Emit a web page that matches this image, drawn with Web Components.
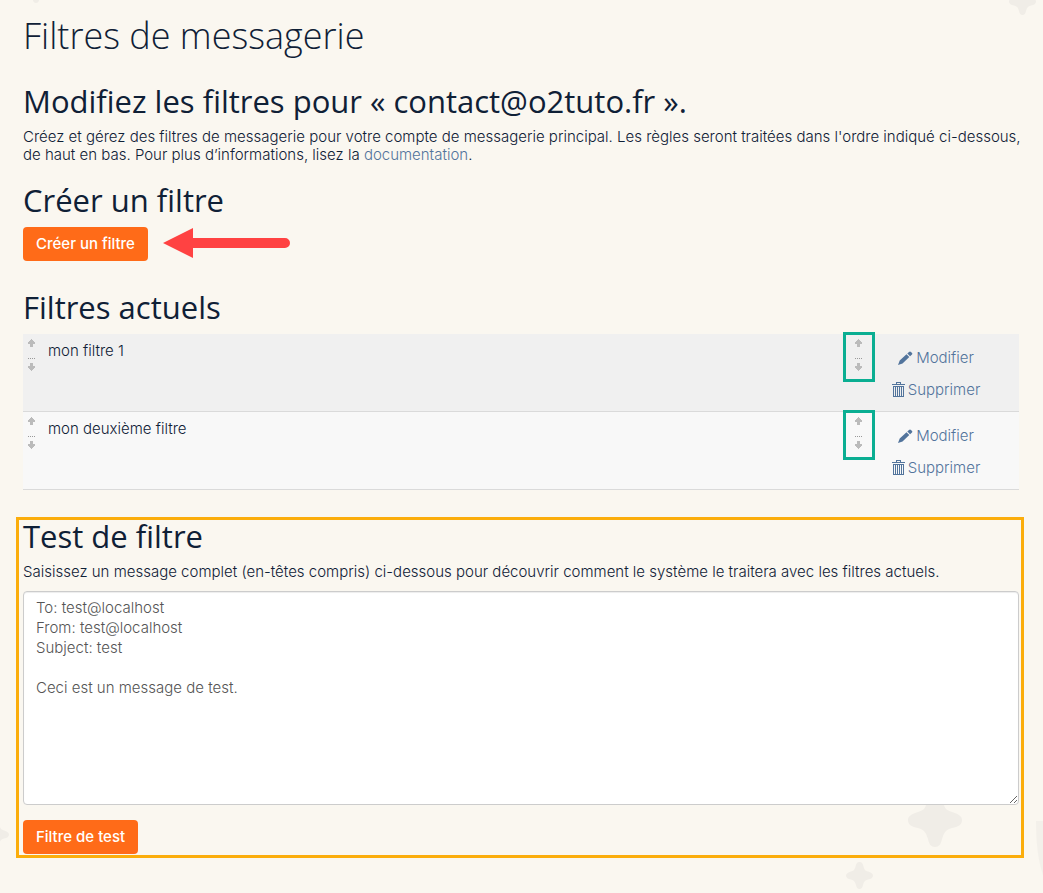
<!DOCTYPE html>
<html lang="fr">
<head>
<meta charset="utf-8">
<meta name="viewport" content="width=device-width, initial-scale=1">
<title>Filtres de messagerie</title>
<style>
  body {
    margin: 0;
    --ink: #0f2036;
    --page: #faf7f0;
    --shade: #f0ede7;
    --accent: #ff6b18;
    --link: #52749c;
    --heading: "Open Sans", sans-serif;
    font: 300 15px/18px Inter, "Liberation Sans", sans-serif;
    color: var(--ink);
    background: var(--page);
  }
</style>
</head>
<body>
<mail-page>
  <page-title>Filtres de messagerie</page-title>
  <page-section heading="Modifiez les filtres pour « contact@o2tuto.fr ».">
    <intro-text></intro-text>
  </page-section>
  <page-section heading="Créer un filtre">
    <create-row></create-row>
  </page-section>
  <page-section heading="Filtres actuels">
    <filter-table filters="mon filtre 1|mon deuxième filtre"></filter-table>
  </page-section>
  <page-section heading="Test de filtre" framed>
    <filter-tester></filter-tester>
  </page-section>
</mail-page>

<script>
const define = (name, html, setup) => {
  const template = document.createElement("template");
  template.innerHTML = html;
  customElements.define(name, class extends HTMLElement {
    constructor() {
      super();
      this.attachShadow({ mode: "open" }).append(template.content.cloneNode(true));
    }
    connectedCallback() {
      if (setup) setup(this, this.shadowRoot);
    }
  });
};

define("background-star", `
  <style>
    :host { display: block; position: absolute; }
    svg { display: block; width: 100%; height: 100%; fill: var(--shade); }
  </style>
  <svg viewBox="0 0 54 54" aria-hidden="true"><path d="M27 0C32 0 34 4 35 9C37 16 38 17 44 19C50 21 54 23 54 27C54 32 50 34 44 35C37 37 36 40 34 46C33 51 31 54 27 54C23 54 21 51 20 46C18 40 17 37 10 35C4 34 0 32 0 27C0 23 4 21 10 19C16 17 17 16 19 9C20 4 22 0 27 0Z"/></svg>
`);

define("mail-page", `
  <style>
    :host { display: block; position: relative; overflow: hidden; min-height: 100vh; box-sizing: border-box; padding: 16px 24px 35px 23px; }
    main { display: flex; flex-direction: column; position: relative; }
    .a { left: 23px; top: -23px; width: 26px; height: 26px; }
    .b { right: 7px; top: -12px; width: 27px; height: 27px; }
    .c { right: 81px; top: 793px; width: 54px; height: 54px; }
    .d { right: 170px; top: 862px; width: 27px; height: 27px; }
    .e { left: -18px; top: 821px; width: 27px; height: 27px; }
    .edge { position: absolute; right: 0; top: 821px; fill: var(--shade); opacity: .6; }
  </style>
  <background-star class="a"></background-star>
  <background-star class="b"></background-star>
  <background-star class="c"></background-star>
  <background-star class="d"></background-star>
  <background-star class="e"></background-star>
  <svg class="edge" width="7" height="54" viewBox="0 0 7 54" aria-hidden="true"><path d="M0 0H7V54Q0 34 0 0Z"/></svg>
  <main><slot></slot></main>
`);

define("page-title", `
  <style>
    :host { display: block; margin-bottom: 29px; }
    h1 { margin: 0; font: 300 36px/40px var(--heading); }
  </style>
  <h1><slot></slot></h1>
`);

define("page-section", `
  <style>
    :host { display: block; margin-bottom: 20px; }
    :host([framed]) { margin: 7px -5px 0 -7px; border: 3px solid #fbad0b; padding: 0 2px 1px 4px; }
    h2 { margin: 0 0 10px; font: 400 31px/33px var(--heading); }
  </style>
  <h2></h2>
  <slot></slot>
`, (host, root) => {
  root.querySelector("h2").textContent = host.getAttribute("heading");
});

define("intro-text", `
  <style>
    :host { display: block; margin-right: -12px; }
    p { margin: 0; }
    span { white-space: nowrap; }
    a { color: var(--link); text-decoration: none; }
  </style>
  <p>Créez et gérez des filtres de messagerie pour votre compte de messagerie principal. Les règles seront traitées dans l'ordre indiqué <span>ci-dessous,</span> de haut en bas. Pour plus d’informations, lisez la <a href="#documentation">documentation</a>.</p>
`);

define("accent-button", `
  <style>
    :host { display: inline-flex; }
    button { font: 500 15px/20px Inter, "Liberation Sans", sans-serif; color: #fff; background: var(--accent); border: 0; border-radius: 4px; padding: 7px 13px; }
  </style>
  <button type="button"><slot></slot></button>
`);

define("create-row", `
  <style>
    :host { display: flex; align-items: center; gap: 15px; padding-bottom: 10px; }
  </style>
  <accent-button>Créer un filtre</accent-button>
  <svg width="127" height="32" viewBox="0 0 127 32" fill="#ff4242" aria-hidden="true"><path d="M0 15L30 0V10H122A5 5 0 0 1 122 20H30V30Z"/></svg>
`);

define("drag-handle", `
  <style>
    :host { display: block; position: relative; width: 7px; height: 33px; }
    svg { display: block; }
    :host([marked])::before { content: ""; position: absolute; box-sizing: border-box; width: 32px; height: 50px; left: -12px; top: -7px; border: 3px solid #0aae92; }
  </style>
  <svg width="7" height="33" viewBox="0 0 7 33" fill="#bbb" aria-hidden="true" shape-rendering="crispEdges">
    <path d="M3 0H4V1H5V2H6V3H7V5H5V8H2V5H0V3H1V2H2V1H3ZM2 24H5V27H7V29H6V30H5V31H4V32H3V31H2V30H1V29H0V27H2Z"/>
    <path fill="#999" d="M0 19H1V20H0ZM2 19H3V20H2ZM4 19H5V20H4ZM6 19H7V20H6Z"/>
  </svg>
`);

define("icon-link", `
  <style>
    :host { display: flex; justify-content: center; line-height: 32px; }
    a { display: flex; align-items: center; gap: 3px; color: var(--link); text-decoration: none; }
    svg { display: none; fill: currentColor; }
    :host([icon="edit"]) .edit, :host([icon="delete"]) .delete { display: block; }
  </style>
  <a href="#filtre">
    <svg class="edit" width="15" height="15" viewBox="0 0 15 15" aria-hidden="true"><path d="M0 14L1.700 9.500L8.500 3.200L11.300 6L4.500 12.500ZM9.300 2.400L11 .900Q12 0 13 .900L14 1.900Q14.800 2.700 14 3.500L12.100 5.200Z"/></svg>
    <svg class="delete" width="13" height="16" viewBox="0 0 13 16" aria-hidden="true"><path fill-rule="evenodd" d="M4 0H9V2H13V3H0V2H4ZM5 1V2H8V1ZM1 4H12V15H1ZM2 5V14H3V5ZM4 5V14H5V5ZM6 5V14H7V5ZM8 5V14H9V5ZM10 5V14H11V5Z"/></svg>
    <slot></slot>
  </a>
`);

define("filter-table", `
  <style>
    :host { display: block; }
    table { width: 100%; border-collapse: separate; border-spacing: 0; }
    td { padding: 8px 0 0; vertical-align: top; border-bottom: 1px solid #dadada; background: #f8f8f8; }
    tr:nth-child(odd) td { background: #f0f0f0; }
    .grip { width: 20px; padding: 5px 0 0 5px; }
    .grip.end { width: 22px; }
    .actions { width: 118px; padding: 8px 24px 5px 0; }
  </style>
  <table aria-label="Filtres actuels"><tbody></tbody></table>
`, (host, root) => {
  const body = root.querySelector("tbody");
  body.replaceChildren();
  for (const name of host.getAttribute("filters").split("|")) {
    const row = body.insertRow();
    row.innerHTML = `<td class="grip"><drag-handle></drag-handle></td><td></td>
      <td class="grip end"><drag-handle marked></drag-handle></td>
      <td class="actions"><icon-link icon="edit">Modifier</icon-link><icon-link icon="delete">Supprimer</icon-link></td>`;
    row.cells[1].textContent = name;
  }
});

define("filter-tester", `
  <style>
    :host { display: flex; flex-direction: column; align-items: flex-start; }
    label { margin-bottom: 10px; }
    textarea { display: block; width: 100%; height: 214px; box-sizing: border-box; margin: 0 0 15px; padding: 6px 12px; border: 1px solid #ccc; border-radius: 4px; background: #fff; box-shadow: inset 0 1px 1px #00000013; color: #555; font: 300 15px/20px Inter, "Liberation Sans", sans-serif; resize: both; }
  </style>
  <label for="message">Saisissez un message complet (en-têtes compris) ci-dessous pour découvrir comment le système le traitera avec les filtres actuels.</label>
  <textarea id="message">To: test@localhost
From: test@localhost
Subject: test

Ceci est un message de test.</textarea>
  <accent-button>Filtre de test</accent-button>
`);
</script>
</body>
</html>
